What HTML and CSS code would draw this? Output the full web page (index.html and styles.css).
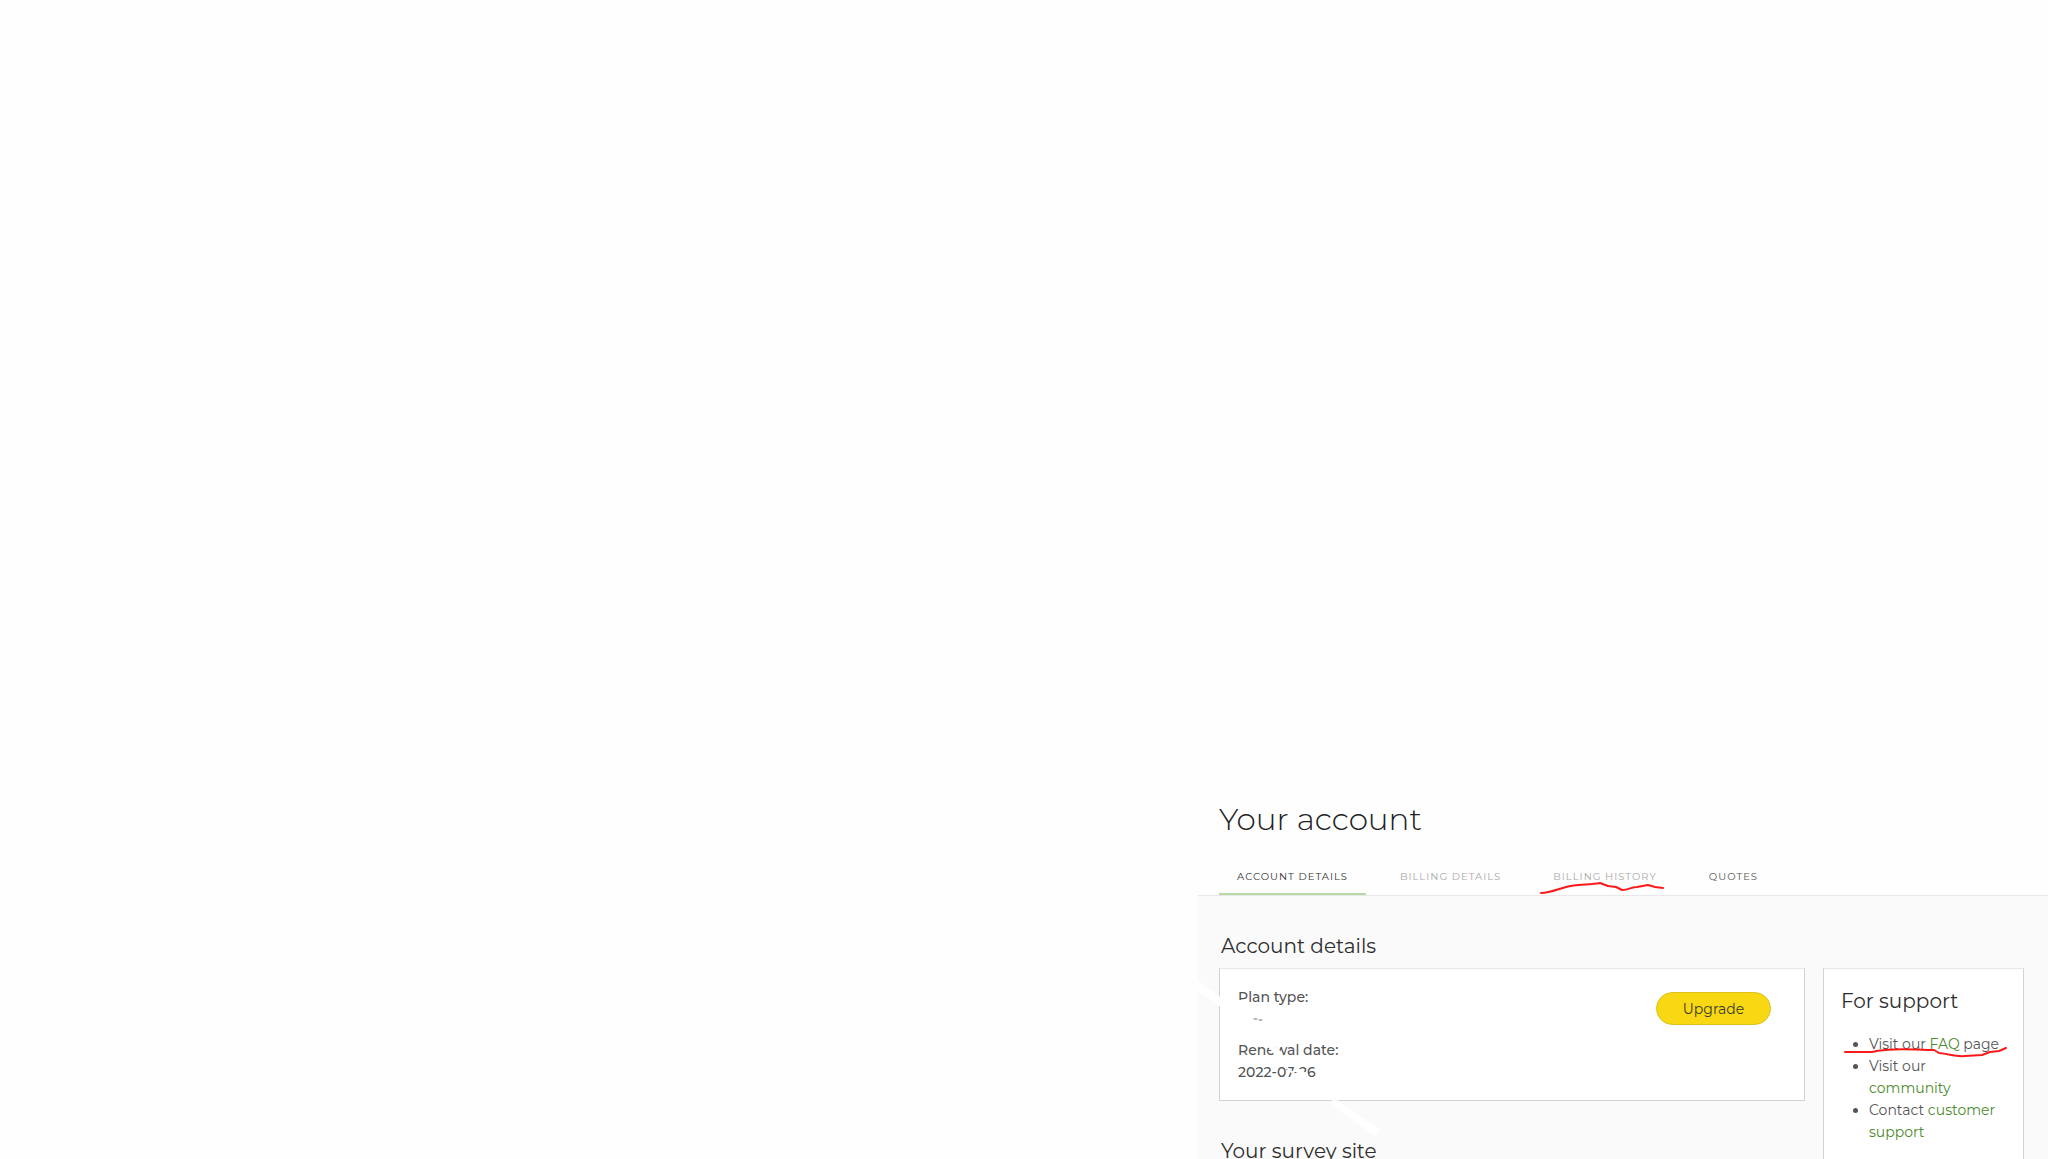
FILE: index.html
```html
<!DOCTYPE html>
<html lang="en">

<head>
  <meta charset="UTF-8">
  <meta name="viewport" content="width=device-width, initial-scale=1.0">
  <title>Your account</title>
  <link rel="stylesheet" href="styles.css">
</head>

<body>
  <div class="page">
    <header>
      <h1>Your account</h1>
      <nav class="tabs">
        <a href="#details" class="active">ACCOUNT DETAILS</a>
        <a href="#billing" class="muted">BILLING DETAILS</a>
        <a href="#history" class="muted marked">BILLING HISTORY
          <svg class="tab_mark" width="124" height="14" viewBox="0 0 124 14">
            <path d="M1 11C10 11 18 7 26 5C36 2 49 3 60 1L68 4L76 5L82 8C88 8 92 5 97 5L108 3L115 5L123 6" />
          </svg>
        </a>
        <a href="#quotes">QUOTES</a>
      </nav>
    </header>

    <main>
      <h2>Account details</h2>
      <div class="columns">
        <section class="card details" id="details">
          <dl>
            <dt>Plan type:</dt>
            <dd class="plan"></dd>
            <dt>Renewal date:</dt>
            <dd>2022-07-26</dd>
          </dl>
          <button type="button" class="upgrade">Upgrade</button>
          <!-- white marker strokes over the plan value -->
          <svg class="eraser" width="200" height="170" viewBox="0 0 200 170">
            <path class="wide" d="M0 17L22 33M137 134L177 162" />
            <path class="thin" d="M40 34L46 34M73 77L80 84M100 106L106 106" />
            <path class="hair" d="M88 98L95 104" />
            <path class="speck" d="M56 50L59 50M61 51L64 51" />
          </svg>
        </section>

        <aside class="card support">
          <h2>For support</h2>
          <ul>
            <li class="marked">Visit our <a href="#faq">FAQ</a> page
              <svg class="faq_mark" width="163" height="12" viewBox="0 0 163 12">
                <path d="M1 6L28 6C40 3 64 3 84 4L90 4L95 7C106 8 111 11 121 10L138 9L146 6L155 5L162 2" />
              </svg>
            </li>
            <li>Visit our <a href="#community">community</a></li>
            <li>Contact <a href="#support">customer support</a></li>
          </ul>
        </aside>

        <h2 class="site_title">Your survey site</h2>
      </div>
    </main>
  </div>
</body>

</html>
```

FILE: styles.css
```css
body {
  margin: 0;
  height: 100vh;
  overflow: hidden;
  background: #fefefe;
  color: #555;
  font-family: Montserrat, Inter, sans-serif;
  font-size: 14px;
  line-height: 22px;
}

.page {
  display: flex;
  flex-direction: column;
  box-sizing: border-box;
  min-height: 100vh;
  margin-left: 58.5%;
  padding-top: 68vh;
}

h1,
h2 {
  margin: 0;
  color: #2d2d2d;
}

h1 {
  padding: 11px 21px;
  color: #222;
  font-size: 31px;
  font-weight: 300;
  line-height: 40px;
}

h2 {
  padding-left: 2px;
  font-size: 20px;
  font-weight: 400;
  line-height: 28px;
}

a {
  color: #4c8a2b;
  text-decoration: none;
}

/* Tab bar */
.tabs {
  display: flex;
  gap: 16px;
  padding: 16px 21px 0;
  border-bottom: 1px solid #e8e8e8;
}

.tabs a {
  padding: 0 18px 5px;
  border-bottom: 2px solid transparent;
  color: #555;
  font-size: 10px;
  font-weight: 400;
  letter-spacing: 1px;
}

.tabs .active {
  border-bottom-color: #b7d9a5;
  color: #333;
}

.tabs .muted {
  color: #a8a8a8;
}

main {
  flex: 1;
  padding: 36px 24px 0 21px;
  background: #fafafa;
}

/* Cards */
.columns {
  display: grid;
  grid-template-columns: 1fr 201px;
  grid-template-rows: auto 1fr;
  column-gap: 18px;
  padding-top: 8px;
}

.card {
  position: relative;
  box-sizing: border-box;
  border: 1px solid #d2d2d2;
  border-top-color: #e8e8e8;
  background: #fff;
}

.details {
  display: flex;
  justify-content: space-between;
  align-items: flex-start;
  padding: 17px 33px 17px 18px;
}

dl {
  margin: 0;
  font-weight: 500;
}

dd {
  margin: 0;
}

.plan {
  height: 31px;
}

.upgrade {
  width: 115px;
  height: 33px;
  margin-top: 6px;
  border: 1px solid #dcc01c;
  border-radius: 17px;
  background: #f8d812;
  color: #3c3a2a;
  font: inherit;
}

.support {
  grid-column: 2;
  grid-row: 1 / 3;
  min-height: 240px;
  padding: 18px 17px;
}

.support h2 {
  padding-left: 0;
}

.support ul {
  margin: 18px 0 0;
  padding-left: 28px;
}

.site_title {
  padding-top: 36px;
}

/* Pen strokes */
.marked {
  position: relative;
}

svg path {
  fill: none;
  stroke: #fb1a1a;
  stroke-width: 2;
  stroke-linecap: round;
  stroke-linejoin: round;
}

.tab_mark {
  position: absolute;
  left: 5px;
  bottom: -3px;
}

.faq_mark {
  position: absolute;
  left: -25px;
  top: 13px;
}

.eraser {
  position: absolute;
  left: -22px;
  top: 0;
}

.eraser .wide {
  stroke: #fff;
  stroke-width: 8;
}

.eraser .thin {
  stroke: #fff;
  stroke-width: 6;
}

.eraser .hair {
  stroke: #fff;
}

.eraser .speck {
  stroke: #777;
  stroke-width: 1;
}
```
